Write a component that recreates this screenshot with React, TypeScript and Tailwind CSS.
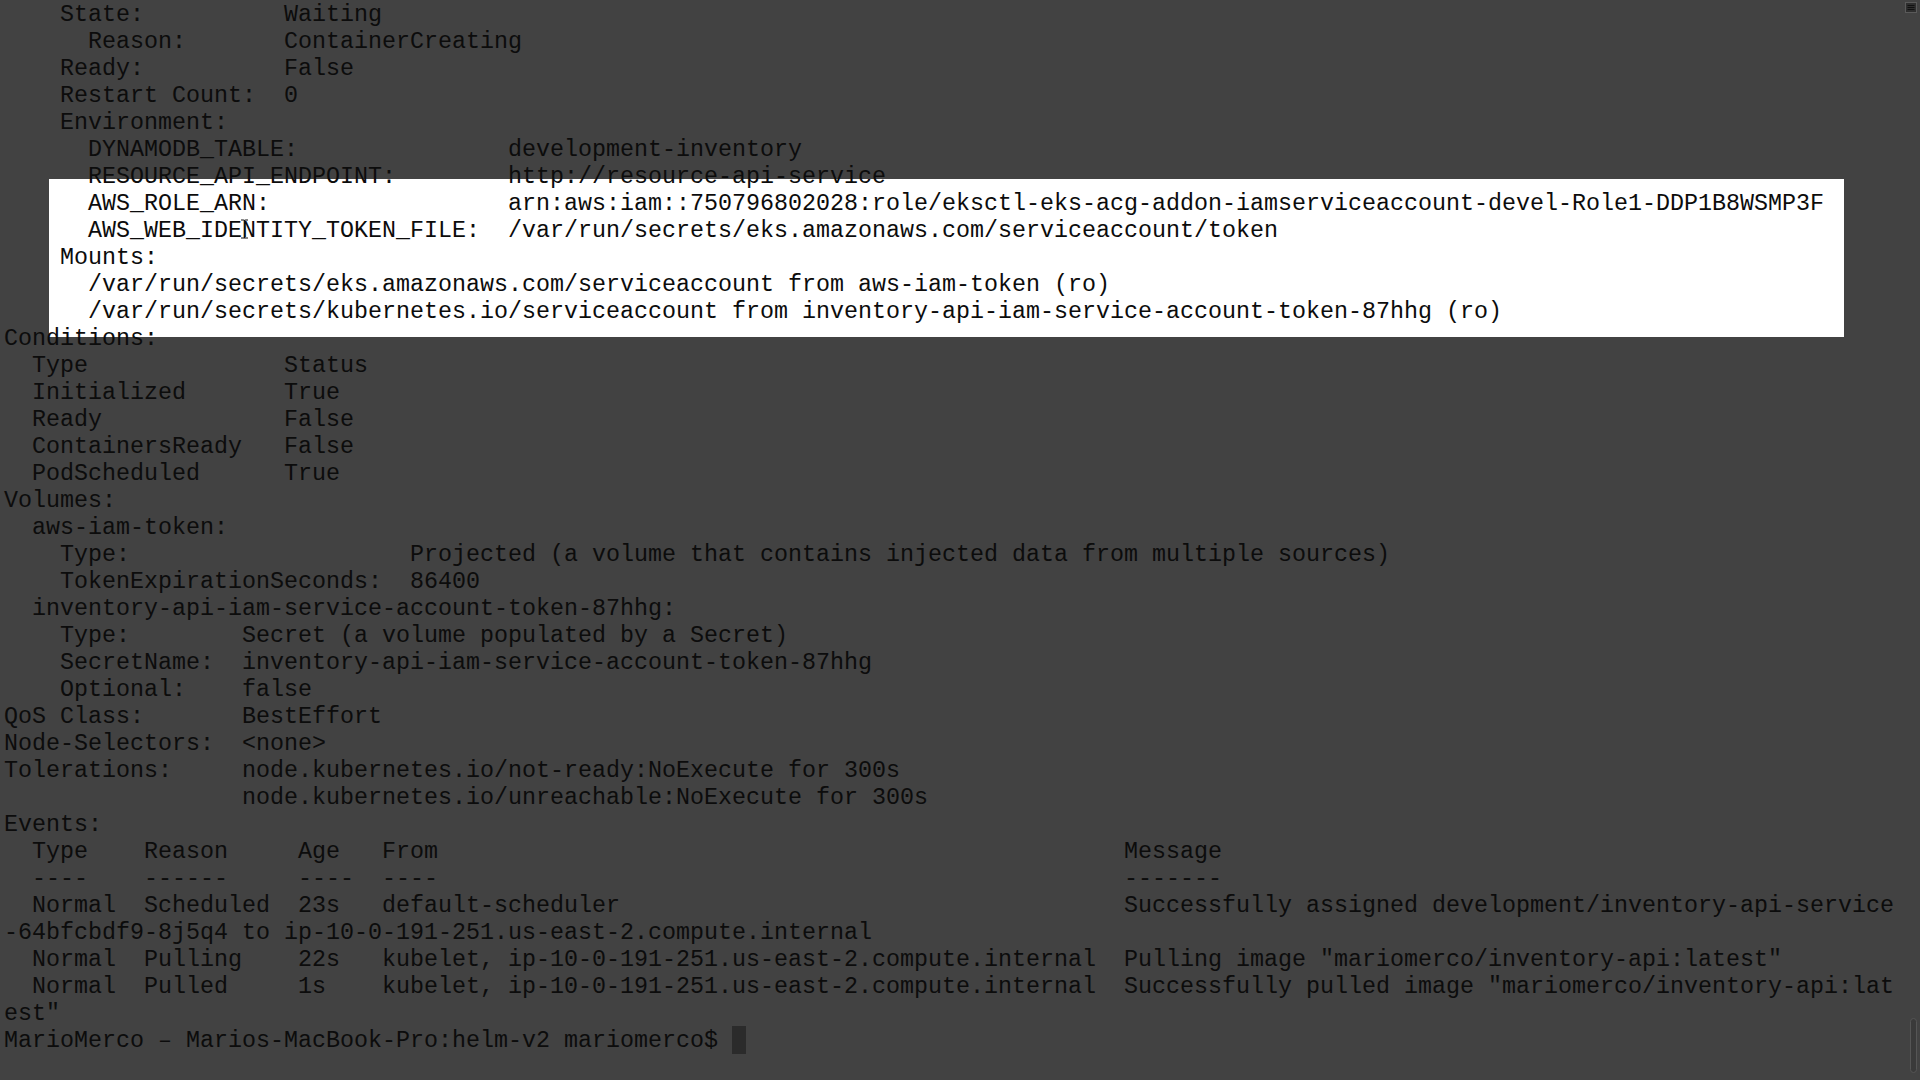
const col = (s: string, n: number) => s.padEnd(n, ' ');

const lines: string[] = [
  '    State:          Waiting',
  '      Reason:       ContainerCreating',
  '    Ready:          False',
  '    Restart Count:  0',
  '    Environment:',
  '      DYNAMODB_TABLE:               development-inventory',
  '      RESOURCE_API_ENDPOINT:        http://resource-api-service',
  '      AWS_ROLE_ARN:                 arn:aws:iam::750796802028:role/eksctl-eks-acg-addon-iamserviceaccount-devel-Role1-DDP1B8WSMP3F',
  '      AWS_WEB_IDENTITY_TOKEN_FILE:  /var/run/secrets/eks.amazonaws.com/serviceaccount/token',
  '    Mounts:',
  '      /var/run/secrets/eks.amazonaws.com/serviceaccount from aws-iam-token (ro)',
  '      /var/run/secrets/kubernetes.io/serviceaccount from inventory-api-iam-service-account-token-87hhg (ro)',
  'Conditions:',
  '  Type              Status',
  '  Initialized       True',
  '  Ready             False',
  '  ContainersReady   False',
  '  PodScheduled      True',
  'Volumes:',
  '  aws-iam-token:',
  '    Type:                    Projected (a volume that contains injected data from multiple sources)',
  '    TokenExpirationSeconds:  86400',
  '  inventory-api-iam-service-account-token-87hhg:',
  '    Type:        Secret (a volume populated by a Secret)',
  '    SecretName:  inventory-api-iam-service-account-token-87hhg',
  '    Optional:    false',
  'QoS Class:       BestEffort',
  'Node-Selectors:  <none>',
  'Tolerations:     node.kubernetes.io/not-ready:NoExecute for 300s',
  '                 node.kubernetes.io/unreachable:NoExecute for 300s',
  'Events:',
  col('  Type    Reason     Age   From', 80) + 'Message',
  col('  ----    ------     ----  ----', 80) + '-------',
  col('  Normal  Scheduled  23s   default-scheduler', 80) + 'Successfully assigned development/inventory-api-service',
  '-64bfcbdf9-8j5q4 to ip-10-0-191-251.us-east-2.compute.internal',
  col('  Normal  Pulling    22s   kubelet, ip-10-0-191-251.us-east-2.compute.internal', 80) + 'Pulling image "mariomerco/inventory-api:latest"',
  col('  Normal  Pulled     1s    kubelet, ip-10-0-191-251.us-east-2.compute.internal', 80) + 'Successfully pulled image "mariomerco/inventory-api:lat',
  'est"',
];

const prompt = 'MarioMerco – Marios-MacBook-Pro:helm-v2 mariomerco$ ';

export default function App() {
  return (
    <div className="relative h-[1080px] w-full overflow-hidden bg-[#424242] font-['Liberation_Mono','DejaVu_Sans_Mono',monospace] text-[23.33px] leading-[27px] text-[#0c0c0c]">
      {/* highlight box from the recording */}
      <div className="absolute left-[49px] top-[179px] h-[158px] w-[1795px] bg-white" />

      <div className="relative pl-[4px] pt-[2px]">
        {lines.map((line, i) => (
          <div key={i} className="h-[27px] whitespace-pre">
            {line}
          </div>
        ))}
        <div className="flex h-[27px] items-start whitespace-pre">
          <span>{prompt}</span>
          <span className="mt-[-2px] inline-block h-[28px] w-[14px] bg-[#2b2b2b]" />
        </div>
      </div>

      {/* mouse I-beam */}
      <svg className="absolute left-[240px] top-[219px]" width="9" height="20" viewBox="0 0 9 20">
        <path d="M1 1h2.5c.5 0 1 .5 1 1 0-.5.5-1 1-1H8M1 19h2.5c.5 0 1-.5 1-1 0 .5.5 1 1 1H8M4.5 2v16" fill="none" stroke="#111" strokeWidth="1.2" />
      </svg>

      {/* top-right tab strip icon */}
      <svg className="absolute right-[3px] top-[2px]" width="12" height="11" viewBox="0 0 12 11">
        <rect x="0.5" y="0.5" width="11" height="10" fill="#2e2e2e" stroke="#5a5a5a" />
        <path d="M2.5 3.5h7M2.5 5.5h7M2.5 7.5h7" stroke="#111" />
      </svg>

      {/* scrollbar */}
      <div className="absolute left-[1910px] top-[1018px] h-[55px] w-[7px] rounded-full border border-[#555] bg-[#3a3a3a]" />
    </div>
  );
}
